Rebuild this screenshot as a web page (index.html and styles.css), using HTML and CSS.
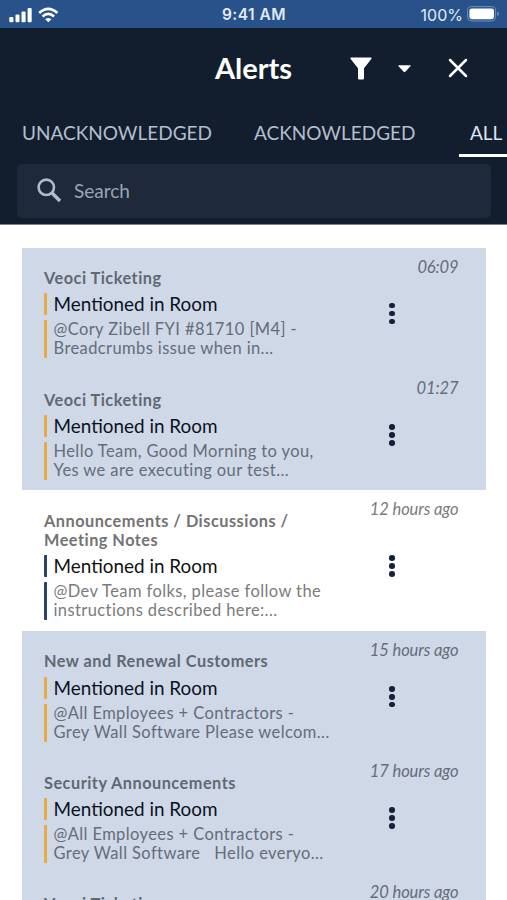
FILE: index.html
```html
<!DOCTYPE html>
<html lang="en">
<head>
<meta charset="utf-8">
<title>Alerts</title>
<link rel="stylesheet" href="styles.css">
</head>
<body>
<div class="status">
  <div class="status-left">
    <svg width="24" height="16" viewBox="0 0 24 16" fill="#fff"><rect x="0.3" y="10" width="4.1" height="5.2" rx="1"/><rect x="6.5" y="7.6" width="4" height="7.6" rx="1"/><rect x="12.5" y="4.6" width="4.1" height="10.6" rx="1"/><rect x="18.6" y="1" width="4.1" height="14.2" rx="1"/></svg>
    <svg width="21" height="16" viewBox="0 0 21 16" fill="none" stroke="#fff" stroke-width="2.7"><path d="M1.2 6.1Q10.3-2.3 19.4 6.1"/><path d="M4.5 9.6Q10.3 4.3 16.1 9.6"/><path d="M10.3 15.3L7.2 12.2Q10.3 9.6 13.4 12.2Z" fill="#fff" stroke="none"/></svg>
  </div>
  <div class="clock">9:41 AM</div>
  <div class="status-right">
    <span>100%</span>
    <svg width="32" height="16" viewBox="0 0 32 16"><rect x=".6" y=".6" width="28" height="14.4" rx="4" fill="none" stroke="#7391bb"/><rect x="2.4" y="2.4" width="24.6" height="10.8" rx="2.4" fill="#fff"/><path d="M30.3 5.6Q32 6 32 7.8T30.3 10Z" fill="#7391bb"/></svg>
  </div>
</div>
<header class="header">
  <div class="titlebar">
    <h1>Alerts</h1>
    <div class="actions">
      <svg width="22" height="23" viewBox="0 0 22 23" fill="#fff"><path d="M1 .5H21Q22 .7 21.3 1.9L14 11.3V21.2Q14 22.4 12.8 22.4H9.2Q8 22.4 8 21.2V11.3L.7 1.9Q0 .7 1 .5Z"/></svg>
      <svg class="caret" width="13" height="8" viewBox="0 0 13 8" fill="#fff"><path d="M.8.3H12.2Q13 .6 12.4 1.3L7.3 6.8Q6.5 7.5 5.7 6.8L.6 1.3Q0 .6.8.3Z"/></svg>
      <svg class="close" width="20" height="20" viewBox="0 0 20 20" stroke="#fff" stroke-width="2.5" stroke-linecap="round"><path d="M2 2L18 18M18 2L2 18"/></svg>
    </div>
  </div>
  <nav class="tabs"><span class="tab unack">UNACKNOWLEDGED</span><span class="tab ack">ACKNOWLEDGED</span><span class="tab active">ALL</span></nav>
  <div class="search">
    <svg width="25" height="25" viewBox="0 0 25 25" fill="none" stroke="#b0bccd"><circle cx="9.3" cy="9.3" r="7.7" stroke-width="2.6"/><path d="M14.5 14.5L23 23" stroke-width="3.5"/></svg>
    <span>Search</span>
  </div>
</header>
<main class="list">
  <article class="item unread">
    <div class="text"><h2>Veoci Ticketing</h2><p class="subject">Mentioned in Room</p><p class="body">@Cory Zibell FYI #81710 [M4] -<br>Breadcrumbs issue when in...</p></div>
    <time>06:09</time><div class="more"><i></i><i></i><i></i></div>
  </article>
  <article class="item unread">
    <div class="text"><h2>Veoci Ticketing</h2><p class="subject">Mentioned in Room</p><p class="body">Hello Team, Good Morning to you,<br>Yes we are executing our test...</p></div>
    <time>01:27</time><div class="more"><i></i><i></i><i></i></div>
  </article>
  <article class="item">
    <div class="text"><h2>Announcements / Discussions /<br>Meeting Notes</h2><p class="subject">Mentioned in Room</p><p class="body">@Dev Team folks, please follow the<br>instructions described here:...</p></div>
    <time>12 hours ago</time><div class="more"><i></i><i></i><i></i></div>
  </article>
  <article class="item unread">
    <div class="text"><h2>New and Renewal Customers</h2><p class="subject">Mentioned in Room</p><p class="body">@All Employees + Contractors -<br>Grey Wall Software Please welcom...</p></div>
    <time>15 hours ago</time><div class="more"><i></i><i></i><i></i></div>
  </article>
  <article class="item unread">
    <div class="text"><h2>Security Announcements</h2><p class="subject">Mentioned in Room</p><p class="body">@All Employees + Contractors -<br>Grey Wall Software &nbsp; Hello everyo...</p></div>
    <time>17 hours ago</time><div class="more"><i></i><i></i><i></i></div>
  </article>
  <article class="item unread">
    <div class="text"><h2>Veoci Ticketing</h2></div>
    <time>20 hours ago</time>
  </article>
</main>
</body>
</html>
```
FILE: styles.css
```css
* { box-sizing: border-box; }
body {
  margin: 0;
  height: 900px;
  overflow: hidden;
  background: #fff;
  font-family: Lato, sans-serif;
}
h1, h2, p { margin: 0; }
svg { display: block; flex: none; }

.status {
  height: 28px;
  background: #285289;
  color: #e0e9f6;
  display: grid;
  grid-template-columns: 1fr auto 1fr;
  align-items: center;
  padding: 0 8px 0 9px;
  font: 16px/28px Inter, sans-serif;
}
.status-left { display: flex; gap: 5px; }
.clock { font-weight: 600; font-size: 15.5px; letter-spacing: .5px; padding-top: 1px; }
.status-right { display: flex; justify-content: flex-end; align-items: center; gap: 4px; }
.status-right span { padding-top: 1px; font-size: 16px; }
.status-right svg { margin-top: -1px; }

.header {
  height: 197px;
  background: #121e2d;
  border-bottom: 1px solid #777d8c;
  display: flex;
  flex-direction: column;
}
.titlebar {
  height: 80px;
  display: grid;
  grid-template-columns: 1fr auto 1fr;
  align-items: center;
}
h1 {
  grid-column: 2;
  color: #fff;
  font-size: 29px;
  font-weight: 700;
  line-height: 36px;
}
.actions { display: flex; align-items: center; padding-left: 58px; }
.caret { margin: 1px 0 0 26px; }
.close { margin-left: 37px; }

.tabs {
  height: 49px;
  display: flex;
  align-items: stretch;
  overflow: hidden;
  padding-left: 22px;
  color: #b3bfcf;
  font-size: 19px;
  line-height: 50px;
  white-space: nowrap;
}
.tab { flex: none; }
.unack { width: 232px; }
.ack { width: 205px; }
.active { width: 48px; padding-left: 11px; color: #dce5f2; border-bottom: 3px solid #fff; }

.search {
  margin: 7px 16px 0 17px;
  height: 54px;
  border-radius: 5px;
  background: #1e2a3c;
  display: flex;
  align-items: center;
  gap: 12px;
  padding: 0 0 1px 20px;
  color: #99a5b6;
  font-size: 19px;
}

.list { padding: 22.6px 21.5px 0 22px; }
.item {
  display: grid;
  grid-template-columns: 312px 1fr;
  padding: 0 27px 0 22px;
  white-space: nowrap;
}
.unread { background: #cfd8e7; --bar: #e9aa3f; --muted: #646d79; --heading: #606873; --ink: #0b111e; }
.item { --edge: var(--bar, #29456f); color: var(--muted, #7b7b7b); }
.text { padding: 20.6px 0 10.6px; }
h2 { font-size: 16.3px; line-height: 19px; letter-spacing: .5px; font-weight: 700; color: var(--heading, #737373); }
.subject, .body { border-left: 3px solid var(--edge); border-radius: 1px; padding-left: 6.5px; margin-top: 5px; }
.subject { margin-top: 6.2px; font-size: 18.9px; line-height: 22px; color: var(--ink, #111); }
.body { font-size: 16.5px; line-height: 19px; letter-spacing: .4px; }
time {
  grid-area: 1 / 2;
  justify-self: end;
  padding-top: 10px;
  font-size: 16.5px;
  letter-spacing: -.1px;
  line-height: 19px;
  font-style: italic;
}
.more {
  grid-area: 1 / 2;
  align-self: center;
  justify-self: start;
  margin: 10.6px 0 0 33px;
  display: flex;
  flex-direction: column;
  gap: 2.4px;
}
.more i { width: 5.6px; height: 5.6px; border-radius: 50%; background: #15213a; }
```
